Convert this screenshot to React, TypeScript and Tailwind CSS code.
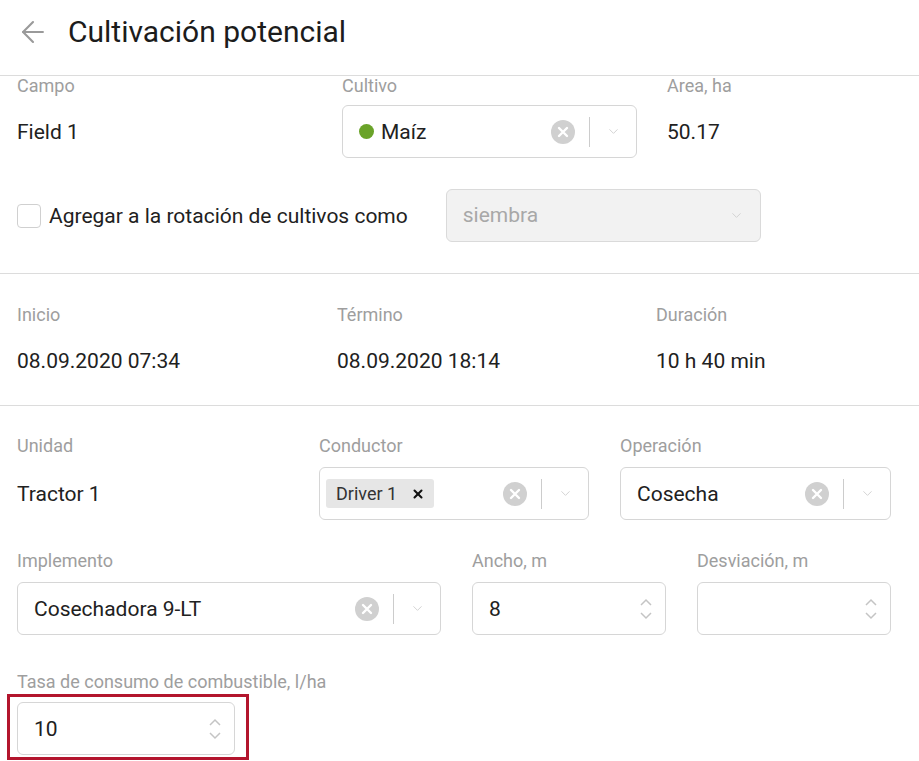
import { ArrowLeft, ChevronDown, X } from "lucide-react";

const label = "block text-[18px] leading-[20px] text-[#9e9e9e]";
const value = "text-[21px] leading-[26px] text-[#212121]";

const ClearIcon = () => (
  <svg width="24" height="24" viewBox="0 0 24 24">
    <circle cx="12" cy="12" r="12" fill="#d0d0d0" />
    <path d="M8 8l8 8M16 8l-8 8" stroke="#fff" strokeWidth="2.4" strokeLinecap="round" />
  </svg>
);

const SelectBox = ({ children, width }: { children: React.ReactNode; width: string }) => (
  <div className={`flex items-center h-[53px] ${width} border border-[#d6d6d6] rounded-md bg-white`}>
    <div className="flex-1 flex items-center pl-4 min-w-0">{children}</div>
    <ClearIcon />
    <span className="w-px h-[30px] bg-[#cccccc] ml-[14px]" />
    <span className="w-[46px] flex justify-center">
      <ChevronDown size={15} strokeWidth={1.5} color="#d0d0d0" />
    </span>
  </div>
);

const Stepper = () => (
  <svg width="14" height="30" viewBox="0 0 14 30" fill="none" stroke="#c4c4c4" strokeWidth="1.5">
    <path d="M2 11l5-5 5 5" />
    <path d="M2 19l5 5 5-5" />
  </svg>
);

const NumberBox = ({ val, width }: { val?: string; width: string }) => (
  <div className={`flex items-center h-[53px] ${width} border border-[#d6d6d6] rounded-md bg-white pl-4 pr-[12px]`}>
    <span className={`flex-1 ${value}`}>{val}</span>
    <Stepper />
  </div>
);

export default function App() {
  return (
    <div className="w-[919px] h-[761px] bg-white overflow-hidden font-['Roboto',sans-serif]">
      <header className="h-[76px] border-b border-[#dcdcdc] flex items-center pb-[12px]">
        <ArrowLeft size={34} strokeWidth={1.5} color="#9a9a9a" className="ml-[16px]" />
        <h1 className="ml-[18px] text-[30px] leading-[36px] text-[#1c1c1c]">Cultivación potencial</h1>
      </header>

      <section className="pl-[17px] pb-[31px] border-b border-[#dcdcdc]">
        <div className="grid grid-cols-[295px_295px_1fr] gap-x-[30px]">
          <span className={label}>Campo</span>
          <span className={label}>Cultivo</span>
          <span className={label}>Area, ha</span>
        </div>
        <div className="grid grid-cols-[295px_295px_1fr] gap-x-[30px] items-center mt-[9px]">
          <span className={value}>Field 1</span>
          <SelectBox width="w-[295px]">
            <span className="w-[15px] h-[15px] rounded-full bg-[#6aa329] mr-[7px]" />
            <span className={value}>Maíz</span>
          </SelectBox>
          <span className={value}>50.17</span>
        </div>
        <div className="flex items-center mt-[31px]">
          <span className="w-[24px] h-[24px] border border-[#d0d0d0] rounded-[4px] bg-white" />
          <span className={`${value} ml-[8px]`}>Agregar a la rotación de cultivos como</span>
          <div className="ml-[38px] flex items-center h-[53px] w-[315px] border border-[#dadada] rounded-md bg-[#f2f2f2] pl-4 pr-[16px]">
            <span className="flex-1 text-[21px] text-[#a8a8a8]">siembra</span>
            <ChevronDown size={15} strokeWidth={1.5} color="#cfcfcf" />
          </div>
        </div>
      </section>

      <section className="pl-[17px] pt-[31px] pb-[31px] border-b border-[#dcdcdc]">
        <div className="grid grid-cols-[290px_289px_1fr] gap-x-[30px]">
          <span className={label}>Inicio</span>
          <span className={label}>Término</span>
          <span className={label}>Duración</span>
        </div>
        <div className="grid grid-cols-[290px_289px_1fr] gap-x-[30px] mt-[23px]">
          <span className={value}>08.09.2020 07:34</span>
          <span className={value}>08.09.2020 18:14</span>
          <span className={value}>10 h 40 min</span>
        </div>
      </section>

      <section className="pl-[17px] pt-[30px]">
        <div className="grid grid-cols-[271px_270px_271px] gap-x-[31px]">
          <span className={label}>Unidad</span>
          <span className={label}>Conductor</span>
          <span className={label}>Operación</span>
        </div>
        <div className="grid grid-cols-[271px_270px_271px] gap-x-[31px] items-center mt-[11px]">
          <span className={value}>Tractor 1</span>
          <div className="flex items-center h-[53px] w-[270px] border border-[#d6d6d6] rounded-md bg-white">
            <div className="flex-1 flex items-center pl-[6px]">
              <span className="flex items-center h-[29px] bg-[#e6e6e6] rounded-[3px] pl-[10px] pr-[9px]">
                <span className="text-[18px] text-[#333333]">Driver 1</span>
                <X size={14} strokeWidth={3.5} color="#111" className="ml-[14px]" />
              </span>
            </div>
            <ClearIcon />
            <span className="w-px h-[30px] bg-[#cccccc] ml-[14px]" />
            <span className="w-[46px] flex justify-center">
              <ChevronDown size={15} strokeWidth={1.5} color="#d0d0d0" />
            </span>
          </div>
          <SelectBox width="w-[271px]">
            <span className={value}>Cosecha</span>
          </SelectBox>
        </div>

        <div className="grid grid-cols-[424px_194px_194px] gap-x-[31px] mt-[31px]">
          <span className={label}>Implemento</span>
          <span className={label}>Ancho, m</span>
          <span className={label}>Desviación, m</span>
        </div>
        <div className="grid grid-cols-[424px_194px_194px] gap-x-[31px] mt-[11px]">
          <SelectBox width="w-[424px]">
            <span className={value}>Cosechadora 9-LT</span>
          </SelectBox>
          <NumberBox val="8" width="w-[194px]" />
          <NumberBox width="w-[194px]" />
        </div>

        <span className={`${label} mt-[37px]`}>Tasa de consumo de combustible, l/ha</span>
        <div className="relative mt-[10px] w-[218px]">
          <NumberBox val="10" width="w-[218px]" />
          <div className="absolute -left-[10px] -top-[8px] w-[242px] h-[66px] border-[3px] border-[#b3152d] pointer-events-none" />
        </div>
      </section>
    </div>
  );
}
